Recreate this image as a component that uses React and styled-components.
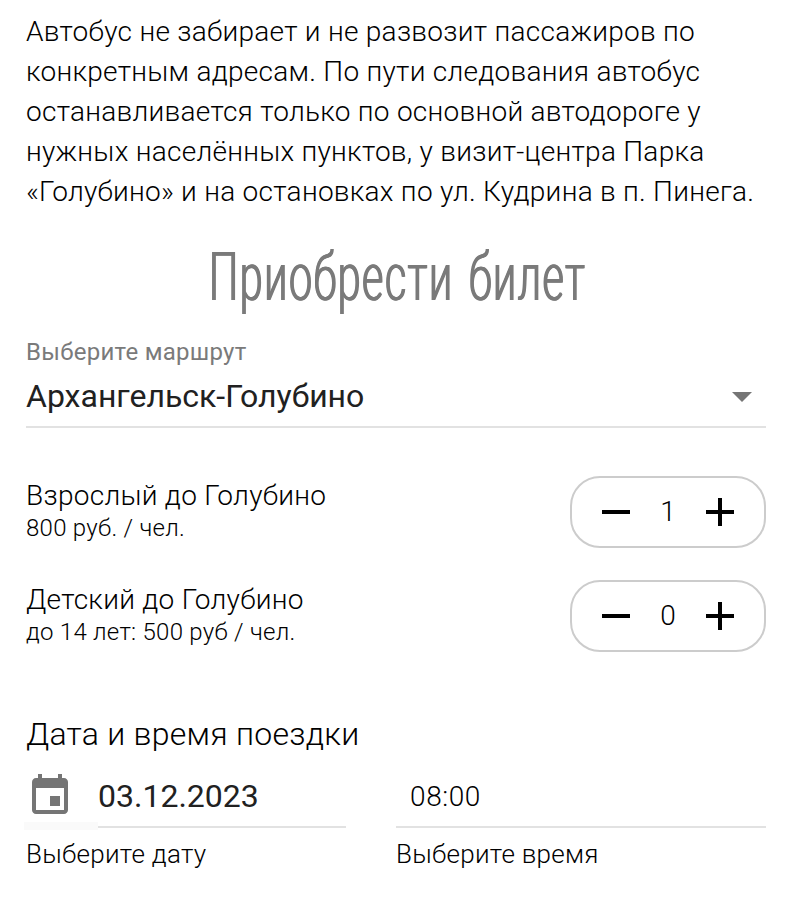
import React, { useState } from "react";
import styled, { createGlobalStyle } from "styled-components";

const Global = createGlobalStyle`
  * { box-sizing: border-box; }
  body { margin: 0; background: #fff; color: #000; font-family: Roboto, "Noto Sans", sans-serif; font-weight: 300; }
`;

const Page = styled.main`
  width: 792px;
  height: 914px;
  padding: 12px 26px 0;
  overflow: hidden;
`;

const Notice = styled.p`
  margin: 0;
  font-size: 28px;
  line-height: 40px;
  letter-spacing: 0.27px;
  white-space: pre-line;
`;

const Title = styled.h1`
  display: flex;
  justify-content: center;
  margin: 34px 0 0;
  padding-left: 3px;
  height: 88px;
  font-size: 66px;
  line-height: 64px;
  font-weight: 300;
  color: #7a7a7a;
  white-space: nowrap;
`;

const Condensed = styled.span`
  transform: scaleX(0.63);
  letter-spacing: 2.2px;
  word-spacing: 6px;
  text-shadow: 1px 0 #7a7a7a, -1px 0 #7a7a7a;
`;

const FieldLabel = styled.div`
  height: 42px;
  font-size: 24px;
  line-height: 36px;
  font-weight: 400;
  letter-spacing: 0.27px;
  color: #7a7a7a;
`;

const Select = styled.div`
  display: flex;
  justify-content: space-between;
  height: 52px;
  border-bottom: 2px solid #e2e2e2;
  font-size: 32px;
  line-height: 40px;
  font-weight: 400;
  color: #212121;
`;

const Icon = styled.svg`
  display: block;
  flex: none;
  width: 48px;
  height: 48px;
  fill: ${p => p.$color || "#000"};
`;

const SelectArrow = styled(Icon)`
  margin-top: -4px;
`;

const Tickets = styled.section`
  display: grid;
  gap: 32px;
  margin-top: 48px;
`;

const TicketRow = styled.div`
  display: flex;
  align-items: center;
  justify-content: space-between;
  height: 72px;
`;

const TicketName = styled.div`
  font-size: 28px;
  line-height: 32px;
  letter-spacing: 0.27px;
`;

const TicketPrice = styled.div`
  font-size: 24px;
  line-height: 32px;
  letter-spacing: 0.26px;
`;

const Stepper = styled.div`
  display: flex;
  align-items: center;
  width: 196px;
  height: 72px;
  padding: 0 20px;
  border: 2px solid #ccc;
  border-radius: 30px;
`;

const StepButton = styled.button`
  padding: 0;
  border: 0;
  background: none;
`;

const Count = styled.span`
  flex: 1;
  text-align: center;
  font-size: 28px;
  line-height: 32px;
`;

const SectionTitle = styled.h2`
  margin: 62px 0 0;
  font-size: 32px;
  line-height: 40px;
  font-weight: 300;
  letter-spacing: 0.26px;
`;

const TripFields = styled.div`
  display: grid;
  grid-template-columns: 320px 370px;
  column-gap: 50px;
  margin-top: 18px;
`;

const DateControl = styled.div`
  display: grid;
  grid-template-columns: 72px 1fr;
  grid-template-rows: 56px;
  height: 56px;
`;

const IconCell = styled.div`
  height: 58px;
  margin-left: -2px;
  padding-left: 2px;
  border-bottom: 8px solid #fafafa;
`;

const DateValue = styled.div`
  padding-top: 4px;
  border-bottom: 2px solid #e2e2e2;
  font-size: 32px;
  line-height: 40px;
  font-weight: 400;
  color: #212121;
`;

const TimeValue = styled.div`
  height: 56px;
  padding: 5px 0 0 14px;
  border-bottom: 2px solid #e2e2e2;
  font-size: 28px;
  line-height: 40px;
  letter-spacing: 0.6px;
`;

const Caption = styled.div`
  margin-top: 6px;
  font-size: 26px;
  line-height: 40px;
  letter-spacing: 0.26px;
`;

const notice = `Автобус не забирает и не развозит пассажиров по
конкретным адресам. По пути следования автобус
останавливается только по основной автодороге у
нужных населённых пунктов, у визит-центра Парка
«Голубино» и на остановках по ул. Кудрина в п. Пинега.`;

function Ticket({ name, price, initial }) {
  const [count, setCount] = useState(initial);
  return (
    <TicketRow>
      <div>
        <TicketName>{name}</TicketName>
        <TicketPrice>{price}</TicketPrice>
      </div>
      <Stepper>
        <StepButton aria-label="Меньше" onClick={() => setCount(Math.max(0, count - 1))}>
          <Icon viewBox="0 0 24 24"><path d="M19 13H5v-2h14v2z" /></Icon>
        </StepButton>
        <Count>{count}</Count>
        <StepButton aria-label="Больше" onClick={() => setCount(count + 1)}>
          <Icon viewBox="0 0 24 24"><path d="M19 13h-6v6h-2v-6H5v-2h6V5h2v6h6v2z" /></Icon>
        </StepButton>
      </Stepper>
    </TicketRow>
  );
}

export default function App() {
  return (
    <Page>
      <Global />
      <Notice>{notice}</Notice>
      <Title><Condensed>Приобрести билет</Condensed></Title>
      <FieldLabel>Выберите маршрут</FieldLabel>
      <Select>
        Архангельск-Голубино
        <SelectArrow viewBox="0 0 24 24" $color="#757575"><path d="M7 10l5 5 5-5z" /></SelectArrow>
      </Select>
      <Tickets>
        <Ticket name="Взрослый до Голубино" price="800 руб. / чел." initial={1} />
        <Ticket name="Детский до Голубино" price="до 14 лет: 500 руб / чел." initial={0} />
      </Tickets>
      <SectionTitle>Дата и время поездки</SectionTitle>
      <TripFields>
        <div>
          <DateControl>
            <IconCell>
              <Icon viewBox="0 0 24 24" $color="#757575">
                <path d="M17 12h-5v5h5v-5zM16 1v2H8V1H6v2H5c-1.11 0-1.99.9-1.99 2L3 19c0 1.1.89 2 2 2h14c1.1 0 2-.9 2-2V5c0-1.1-.9-2-2-2h-1V1h-2zm3 18H5V8h14v11z" />
              </Icon>
            </IconCell>
            <DateValue>03.12.2023</DateValue>
          </DateControl>
          <Caption>Выберите дату</Caption>
        </div>
        <div>
          <TimeValue>08:00</TimeValue>
          <Caption>Выберите время</Caption>
        </div>
      </TripFields>
    </Page>
  );
}
